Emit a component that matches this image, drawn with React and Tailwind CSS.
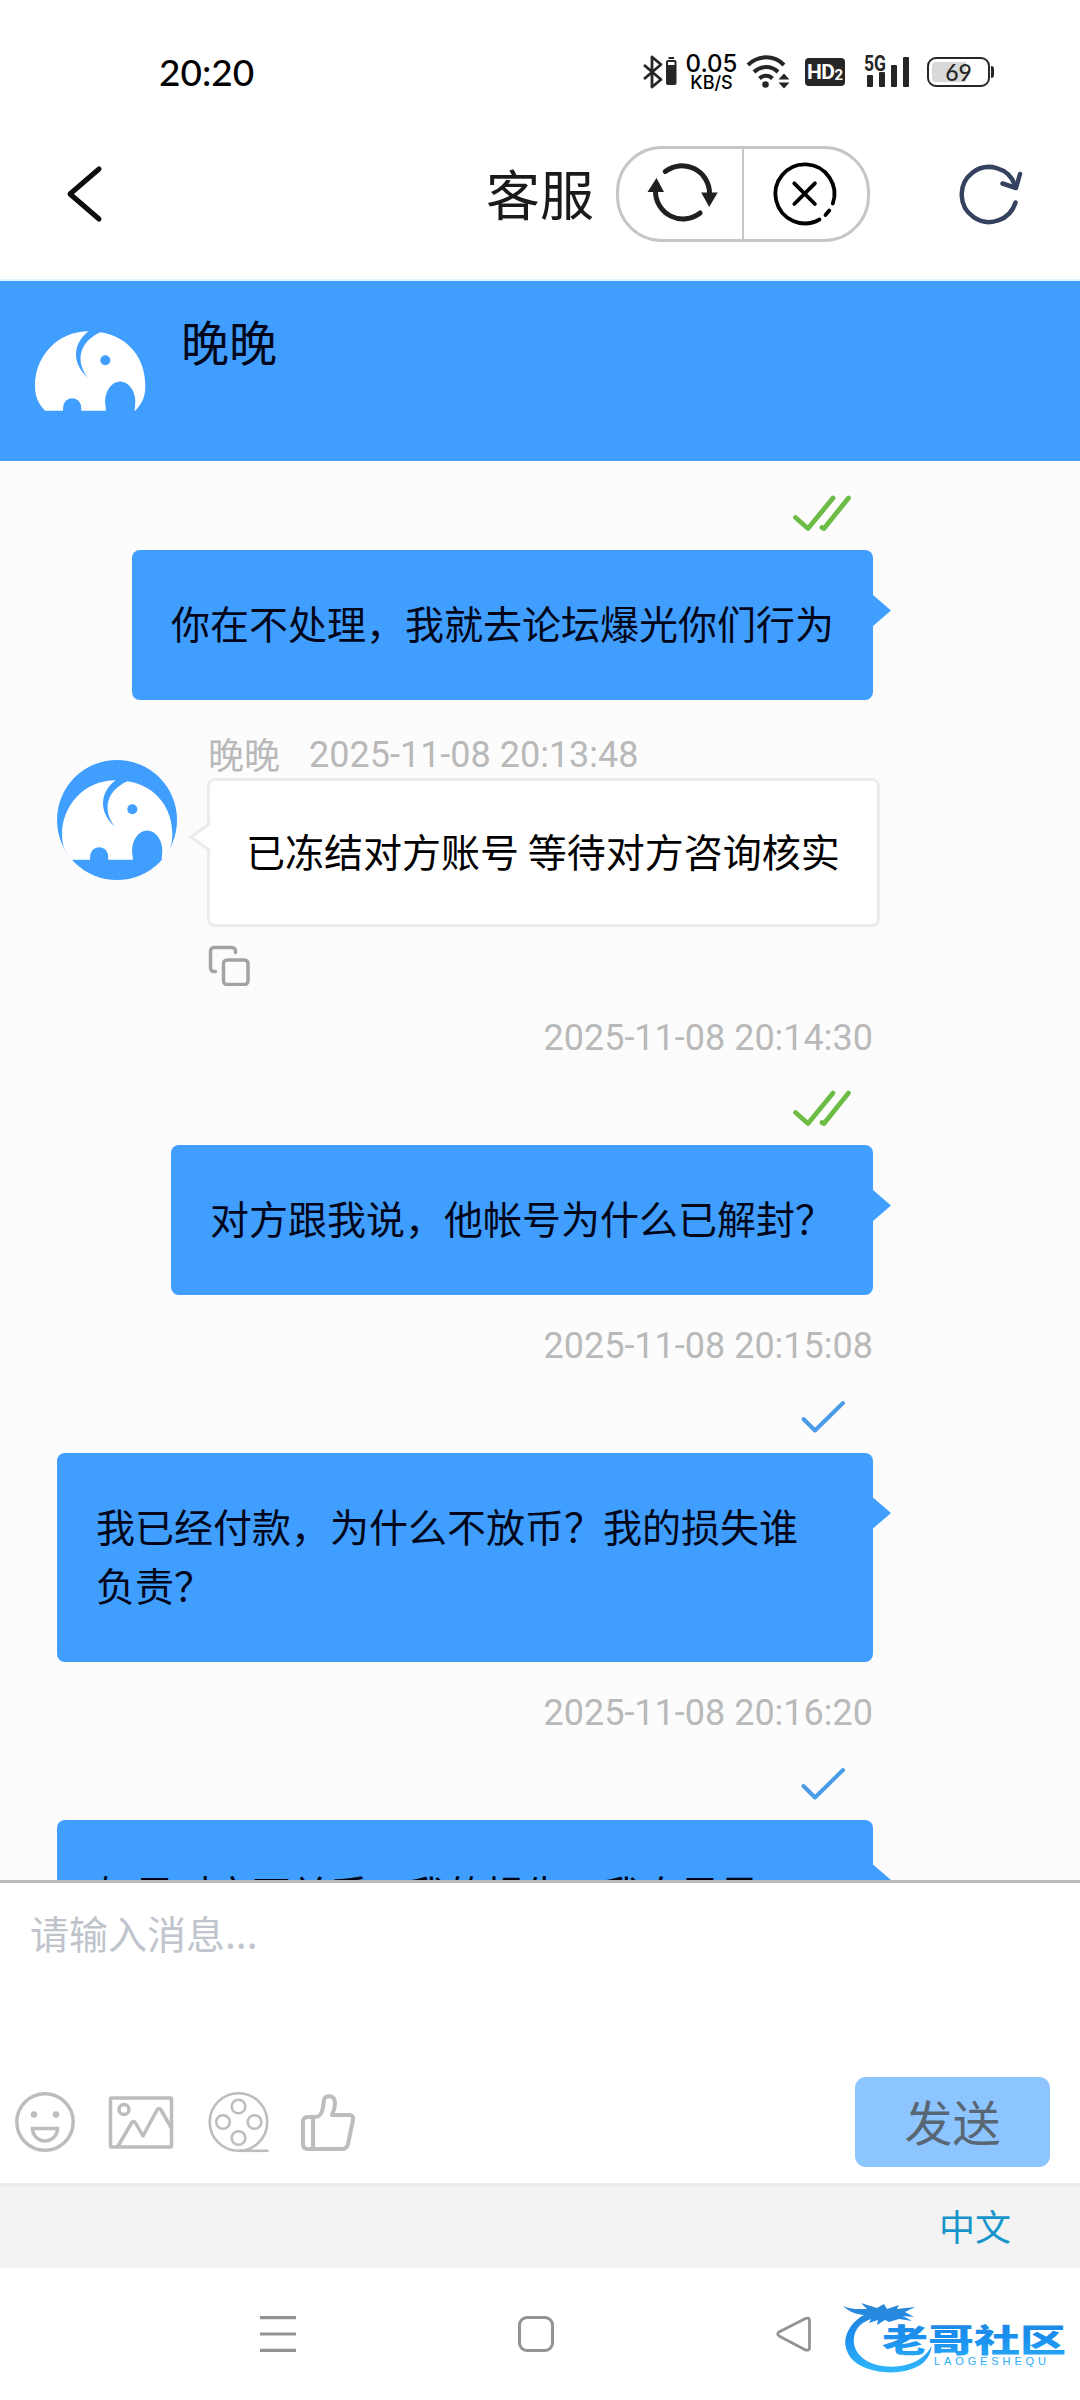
import React from 'react';

const SIGNAL_BARS = [
  { x: 3, y: 21, h: 12 },
  { x: 15, y: 18, h: 15 },
  { x: 27, y: 11, h: 22 },
  { x: 39, y: 3, h: 30 },
];

function StatusBar() {
  return (
    <div className="flex h-36 shrink-0 items-center pl-[159px] text-[#262626]">
      <span className="mb-[2px] w-[484px] font-[Lato] text-[37px] leading-none font-medium text-black">20:20</span>
      <svg className="h-9 w-9 shrink-0" viewBox="0 0 36 36" fill="none">
        <path d="M1 11 18 25.5 9 33V3l9 7.500L1 25" stroke="currentColor" strokeWidth="2.800" strokeLinejoin="round" />
        <rect x="23" y="6" width="10.500" height="25" rx="2" fill="currentColor" />
        <rect x="25.500" y="3" width="5.500" height="2" fill="currentColor" />
        <rect x="25" y="8" width="6.500" height="3" fill="#fff" />
      </svg>
      <div className="ml-[7px] flex w-[51px] flex-col items-center text-black">
        <span className="font-[Inter] text-[24px] leading-[20px] font-medium">0.05</span>
        <span className="font-[Inter] text-[18px] leading-[17px] font-medium">KB/S</span>
      </div>
      <svg className="ml-2 h-9 w-11 shrink-0" viewBox="0 0 44 36" fill="none">
        <path d="M3 11a25 25 0 0 1 36 0M9 18a17 17 0 0 1 24 0M14.500 24.500a9 9 0 0 1 13 0" stroke="currentColor" strokeWidth="4" />
        <circle cx="20.500" cy="30.500" r="3.300" fill="currentColor" />
        <path d="m33.500 25.500 5.500-6 5.500 6zM33.500 28.500l5.500 6 5.500-6z" fill="currentColor" />
      </svg>
      <div className="ml-4 flex h-7 w-10 shrink-0 items-center justify-center rounded bg-[#262626] font-[Roboto] font-bold text-white">
        <span className="text-[21px] leading-none tracking-[-0.5px]">HD</span>
        <span className="mt-[6px] text-[15px] leading-none">2</span>
      </div>
      <svg className="ml-[19px] h-9 w-12 shrink-0 overflow-visible" viewBox="0 0 48 36">
        <text x="0" y="16.500" textLength="22" lengthAdjust="spacingAndGlyphs" className="font-[Roboto] text-[22px] font-bold" fill="currentColor">5G</text>
        {SIGNAL_BARS.map((bar) => (
          <rect key={bar.x} x={bar.x} y={bar.y} width="6" height={bar.h} rx="1" fill="currentColor" />
        ))}
      </svg>
      <div className="ml-[15px] flex items-center">
        <div className="flex h-[30px] w-[63px] items-center justify-center rounded-[9px] border-2 border-[#262626] bg-[linear-gradient(90deg,#d9d9d9_62%,#ffffff_62%)] bg-clip-content p-[3px] font-[Lato] text-[23px] leading-none font-medium">
          69
        </div>
        <div className="ml-px h-3 w-[3px] rounded-r bg-[#262626]" />
      </div>
    </div>
  );
}

function TitleBar() {
  return (
    <div className="flex h-[137px] shrink-0 items-start text-[#202020]">
      <svg className="mt-5 ml-[60px] h-[60px] w-[50px]" viewBox="0 0 50 60" fill="none">
        <path d="M39 5 10 30l29 25" stroke="#0d0d0d" strokeWidth="5" strokeLinecap="round" strokeLinejoin="round" />
      </svg>
      <span className="mt-[14px] ml-[376px] w-[130px] text-[54px] leading-[70px] text-[#1a1a1a]">客服</span>
      <div className="mt-[2px] flex h-24 w-[254px] rounded-[46px] border-[3px] border-[#c6c6c6]">
        <button className="flex w-[125px] items-center justify-center border-r-2 border-[#c6c6c6]" type="button">
          <svg className="h-20 w-20" viewBox="640.500 154 80 80" fill="none">
            <path d="M664.700 171.500A27.500 27.500 0 0 1 709 193M655 191a27.500 27.500 0 0 0 44.600 22" stroke="currentColor" strokeWidth="5" strokeLinecap="round" />
            <path d="M700.700 192.500h16.500l-8.500 14.500zM647 192h16.500l-7.500-14z" fill="currentColor" />
          </svg>
        </button>
        <button className="flex flex-1 items-center justify-center" type="button">
          <svg className="h-20 w-20" viewBox="765.500 154 80 80" fill="none" stroke="#000" strokeWidth="3.800" strokeLinecap="round">
            <path d="M832.300 203.500A29.500 29.500 0 1 0 819 219.500M828.800 210.500l-3.800 4.500M793.800 183.300l20.600 20.700M814.400 183.300 793.800 204" />
          </svg>
        </button>
      </div>
      <svg className="mt-5 ml-[84px] h-[62px] w-[72px]" viewBox="954 164 72 62" fill="none" stroke="#35425f" strokeWidth="4.500" strokeLinecap="round" strokeLinejoin="round">
        <path d="M1015.500 202.500A27.500 27.500 0 1 1 1015 185" />
        <path d="M1002.500 183.500l13.500 4.500 4-14" />
      </svg>
    </div>
  );
}

function Avatar() {
  return (
    <svg className="h-[120px] w-[120px] shrink-0" viewBox="0 0 360 360">
      <circle cx="180" cy="180" r="180" fill="#409eff" />
      <path
        transform="translate(11 58)"
        fill="#fff"
        d="M34 241C14 220 4 200 4 165 4 80 70 3 165 3 117 38 113 100 163 142 128 100 130 38 200 6 290 20 335 90 335 165 335 200 325 220 305 241H303L305 215A45 61 0 0 0 214 215L217 241H143L142 225A27 26 0 0 0 89 225L88 241Z"
      />
      <circle cx="226" cy="148" r="15" fill="#409eff" />
    </svg>
  );
}

function Outgoing({ time, read, children }) {
  return (
    <div className="flex w-[873px] flex-col items-end">
      {time && (
        <span className="mt-[30px] mb-7 h-[42px] font-[Roboto] text-[36px] leading-[42px] text-[#b9b9b9]">{time}</span>
      )}
      <svg className="mr-5 mb-[14px] h-11 w-[62px] shrink-0" viewBox="0 0 62 44" fill="none" strokeLinecap="round" strokeLinejoin="round">
        {read ? (
          <path d="M4.500 25.500 17 36.500 42 6M31 35.500l2 1L57.500 6" stroke="#6cbc45" strokeWidth="4.800" />
        ) : (
          <path d="M12.500 24 24 35.500 52 8" stroke="#4a9be8" strokeWidth="4" />
        )}
      </svg>
      <div className="relative max-w-[816px] rounded-lg bg-[#409eff] px-[39px] pt-[43px] pb-[47px] text-[39px] leading-[59.5px] text-[#02061a]">
        {children}
        <span className="absolute top-[45px] left-full h-[31px] w-[18px] bg-[#409eff] [clip-path:polygon(0_0,100%_50%,0_100%)]" />
      </div>
    </div>
  );
}

function Incoming({ name, time, children }) {
  return (
    <div className="flex pt-[34.5px] pb-px pl-[57px]">
      <div className="pt-[26px]">
        <Avatar />
      </div>
      <div className="ml-[30px] flex flex-col items-start">
        <div className="flex h-[42px] items-center gap-[29px] pl-px text-[36px] leading-[42px] text-[#b9b9b9]">
          <span className="mb-1">{name}</span>
          <span className="font-[Roboto]">{time}</span>
        </div>
        <div className="relative mt-[2px] h-[149px] rounded-lg border-[3px] border-[#ececec] bg-white pr-[37px] pl-9 text-[39px] leading-[139px] text-black">
          {children}
          <svg className="absolute top-[40px] -left-[22px] h-8 w-6" viewBox="0 0 24 32" fill="#fff">
            <path d="M22.500 2 3 16l19.500 14" stroke="#ececec" strokeWidth="3" />
          </svg>
        </div>
        <svg className="mt-[18px] h-[41px] w-[43px]" viewBox="0 0 43 41" fill="none" stroke="#a3a3a3" strokeWidth="3.500" strokeLinecap="round">
          <path d="M8.500 26.500H7a3.500 3.500 0 0 1-3.500-3.500V6A3.500 3.500 0 0 1 7 2.500h18A3.500 3.500 0 0 1 28.500 6v1.500" />
          <rect x="16.500" y="15" width="24.500" height="24.500" rx="3.500" />
        </svg>
      </div>
    </div>
  );
}

function Composer() {
  return (
    <div className="flex h-[303px] shrink-0 flex-col border-t-[3px] border-[#bbbbbb] bg-white">
      <span className="pt-5 pl-[30px] text-[39px] leading-[58px] text-[#c0c4cc]">请输入消息...</span>
      <div className="mt-[116px] flex h-[90px] items-center pr-[30px] pl-[13px]">
        <svg className="h-16 w-16" viewBox="0 0 64 64" fill="none" stroke="#bdbdbd" strokeWidth="3.500">
          <circle cx="32" cy="32" r="28.200" />
          <circle cx="21" cy="24.500" r="3.200" fill="#bdbdbd" stroke="none" />
          <circle cx="43" cy="24.500" r="3.200" fill="#bdbdbd" stroke="none" />
          <path d="M19.500 38.500h25a12.500 12.500 0 0 1-25 0z" />
        </svg>
        <svg className="ml-[30px] h-16 w-[68px]" viewBox="0 0 68 64" fill="none" stroke="#bdbdbd" strokeWidth="3.500" strokeLinejoin="round">
          <rect x="3.500" y="8" width="61" height="49" rx="1" />
          <circle cx="17" cy="19.500" r="5" />
          <path d="m10.500 57 14-24q2-3 4 0L36 46l14-26q2-3 4 0l11 19" />
        </svg>
        <svg className="ml-[32px] h-16 w-16" viewBox="0 0 64 64" fill="none" stroke="#bdbdbd" strokeWidth="2.600">
          <circle cx="31.500" cy="32" r="28.800" />
          <circle cx="31.500" cy="16.500" r="6.800" />
          <circle cx="31.500" cy="48" r="6.800" />
          <circle cx="16" cy="32" r="6.800" />
          <circle cx="47.500" cy="32" r="6.800" />
          <path d="M31.500 60.800h30" />
        </svg>
        <svg className="ml-[25px] h-16 w-16" viewBox="0 0 64 64" fill="none" stroke="#bdbdbd" strokeWidth="4" strokeLinejoin="round">
          <path d="M19 27c7 0 8-8 9-17 1-6 11-5 11 3 0 4-1 8-3 12h17q5 0 4 5l-5 24q-1 5-6 5H12q-5 0-5-5V32q0-5 5-5zM17 27v32" />
        </svg>
        <button className="ml-auto h-[90px] w-[195px] rounded-[11px] bg-[#8cc5ff] pb-1 text-[48px] leading-[84px] text-[#596673]" type="button">
          发送
        </button>
      </div>
    </div>
  );
}

function CommunityLogo() {
  return (
    <svg className="ml-[29px] h-20 w-[224px] shrink-0" viewBox="840 2296 224 80">
      <defs>
        <linearGradient id="ink" x1="0" y1="2305" x2="0" y2="2372" gradientUnits="userSpaceOnUse">
          <stop offset="0" stopColor="#2b86d6" />
          <stop offset="0.500" stopColor="#1a8eee" />
          <stop offset="1" stopColor="#2fb5fa" />
        </linearGradient>
      </defs>
      <g fill="url(#ink)">
        <path d="M873 2313C850 2319 840 2340 846 2353 854 2377 905 2381 923 2364 929 2358 930 2353 930.500 2348 926 2357 918 2363 908 2366 885 2373 857 2366 853 2346 851 2333 860 2322 875 2320Z" />
        <path d="M842 2308C850 2312 860 2311 866 2311L860 2305 876 2310 883 2306 886 2311 898 2307 896 2311 914 2309 904 2314 913 2319 902 2318 911 2323 898 2321 888 2324 884 2322 876 2327 877 2322 868 2325 872 2317C862 2318 850 2316 842 2308Z" />
        <text x="881" y="2354" textLength="184" lengthAdjust="spacingAndGlyphs" className="font-['Noto_Sans_CJK_SC'] text-[32px] font-black">老哥社区</text>
        <text x="933" y="2366.500" textLength="112" className="font-['Liberation_Sans'] text-[11px]">LAOGESHEQU</text>
      </g>
    </svg>
  );
}

function NavBar() {
  return (
    <div className="flex h-[132px] shrink-0 items-center bg-white pl-[260px]">
      <svg className="h-9 w-9" viewBox="0 0 36 36" stroke="#939393" strokeWidth="3.200">
        <path d="M0 1.700h36M0 18h36M0 34.300h36" />
      </svg>
      <div className="ml-[222px] h-9 w-9 rounded-[9px] border-[3px] border-[#939393]" />
      <svg className="ml-[222px] h-9 w-9" viewBox="0 0 36 36" fill="none" stroke="#939393" strokeWidth="2.800" strokeLinejoin="round">
        <path d="M29.500 2.500 3 16q-2.500 2 0 4l26.500 14q4 1 4-2.500v-27q0-3.500-4-2z" />
      </svg>
      <CommunityLogo />
    </div>
  );
}

export default function App() {
  return (
    <main className="flex h-[2400px] w-[1080px] flex-col overflow-hidden bg-white font-['Noto_Sans_CJK_SC',sans-serif]">
      <StatusBar />
      <TitleBar />
      <header className="flex h-[180px] shrink-0 bg-[#409eff] pt-[30px] pl-[30px] ring-2 ring-[#e2f3fb]">
        <Avatar />
        <span className="mt-[-6px] ml-[31px] text-[48px] leading-[70px] text-[#02061a]">晚晚</span>
      </header>
      <section className="min-h-0 flex-1 overflow-hidden bg-[#fcfcfc] pt-[31px]">
        <Outgoing read>你在不处理，我就去论坛爆光你们行为</Outgoing>
        <Incoming name="晚晚" time="2025-11-08 20:13:48">已冻结对方账号 等待对方咨询核实</Incoming>
        <Outgoing time="2025-11-08 20:14:30" read>对方跟我说，他帐号为什么已解封？</Outgoing>
        <Outgoing time="2025-11-08 20:15:08">我已经付款，为什么不放币？我的损失谁负责？</Outgoing>
        <Outgoing time="2025-11-08 20:16:20">如果对方不关系，我的损失，我自己是，负责？</Outgoing>
      </section>
      <Composer />
      <div className="flex h-[85px] shrink-0 items-center justify-end border-t-[3px] border-[#ececec] bg-[#f3f3f3] pr-[69px] pb-1 text-[36px] text-[#1795ca]">
        中文
      </div>
      <NavBar />
    </main>
  );
}
